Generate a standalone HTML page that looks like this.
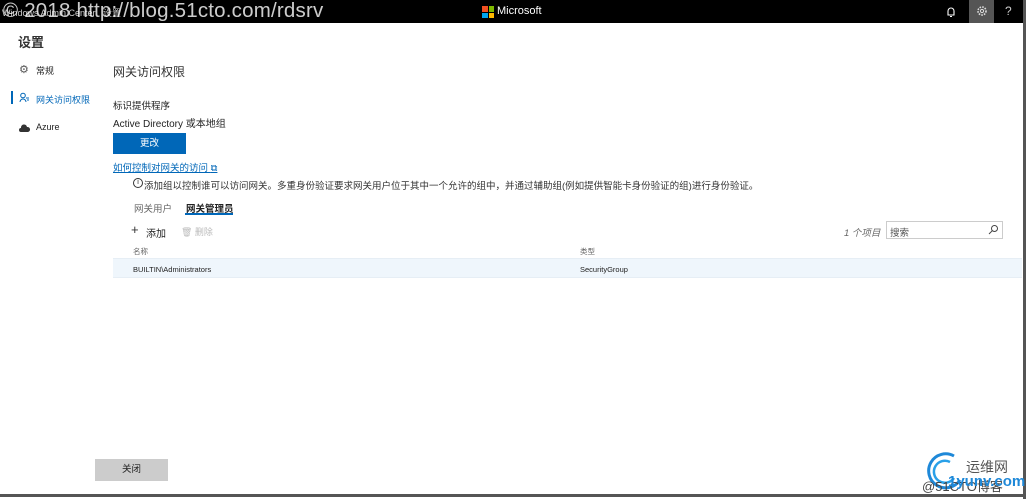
<!DOCTYPE html>
<html><head><meta charset="utf-8">
<style>
*{margin:0;padding:0;box-sizing:border-box}
body{width:1028px;height:499px;overflow:hidden;background:#fff;font-family:"Liberation Sans","Noto Sans CJK SC",sans-serif;color:#222;position:relative;font-size:9px}
.abs{position:absolute;white-space:nowrap}
.top{position:absolute;left:0;top:0;width:1024px;height:23px;background:#000}
</style></head><body>
<div class="top"></div>
<div class="abs" style="left:2px;top:6px;font-size:9px;color:#ccc">Windows Admin Center &nbsp; 设置</div>
<div class="abs" style="left:3px;top:-1px;font-size:20.5px;color:rgba(255,255,255,0.8);letter-spacing:0.2px">© 2018 http://blog.51cto.com/rdsrv</div>
<div class="abs" style="left:482px;top:6px;width:12px;height:12px">
<div style="position:absolute;left:0;top:0;width:5.5px;height:5.5px;background:#f25022"></div>
<div style="position:absolute;left:6.5px;top:0;width:5.5px;height:5.5px;background:#7fba00"></div>
<div style="position:absolute;left:0;top:6.5px;width:5.5px;height:5.5px;background:#00a4ef"></div>
<div style="position:absolute;left:6.5px;top:6.5px;width:5.5px;height:5.5px;background:#ffb900"></div></div>
<div class="abs" style="left:497px;top:5px;font-size:11px;color:#fff">Microsoft</div>
<svg class="abs" style="left:946px;top:6px" width="10" height="12" viewBox="0 0 10 12"><path d="M2 9V5a3 3 0 0 1 6 0v4H2zM4 10.5h2" stroke="#fff" fill="none" stroke-width="1.1"/></svg>
<div class="abs" style="left:969px;top:0;width:25px;height:23px;background:#555"></div>
<svg class="abs" style="left:976px;top:5px" width="12" height="12" viewBox="0 0 12 12"><circle cx="6" cy="6" r="4" stroke="#ddd" fill="none" stroke-width="1.6" stroke-dasharray="1.6 1.1"/><circle cx="6" cy="6" r="1.6" stroke="#ddd" fill="none"/></svg>
<div class="abs" style="left:1005px;top:4px;font-size:12px;color:#ccc">?</div>
<div class="abs" style="left:1023px;top:0;width:3px;height:499px;background:#555"></div>
<div class="abs" style="left:0;top:494px;width:1026px;height:3px;background:#555"></div>

<div class="abs" style="left:18px;top:32px;font-size:13px;font-weight:bold;color:#333">设置</div>
<div class="abs" style="left:19px;top:63px;font-size:11px;color:#555">⚙</div>
<div class="abs" style="left:36px;top:64px;font-size:9px">常规</div>
<div class="abs" style="left:11px;top:91px;width:2px;height:13px;background:#0067b8"></div>
<svg class="abs" style="left:19px;top:92px" width="11" height="11" viewBox="0 0 11 11"><circle cx="4" cy="3.5" r="2.3" stroke="#0067b8" fill="none"/><path d="M1 10a3 3 0 0 1 6 0M7 6h3M8 8h2" stroke="#0067b8" fill="none"/></svg>
<div class="abs" style="left:36px;top:93px;font-size:9px;color:#0067b8">网关访问权限</div>
<svg class="abs" style="left:19px;top:124px" width="11" height="8" viewBox="0 0 11 8"><path d="M2 8a2 2 0 0 1 0-4a3 3 0 0 1 6-1a2.5 2.5 0 0 1 1 5z" fill="#333"/></svg>
<div class="abs" style="left:36px;top:122px;font-size:9px">Azure</div>

<div class="abs" style="left:113px;top:63px;font-size:12px;color:#333">网关访问权限</div>
<div class="abs" style="left:113px;top:98px;font-size:9.5px">标识提供程序</div>
<div class="abs" style="left:113px;top:115px;font-size:10px">Active Directory 或本地组</div>
<div class="abs" style="left:113px;top:133px;width:73px;height:21px;background:#0067b8;color:#fff;font-size:9.5px;text-align:center;line-height:21px">更改</div>
<div class="abs" style="left:113px;top:160px;font-size:9.5px;color:#0067b8;text-decoration:underline">如何控制对网关的访问 <span style="text-decoration:none">⧉</span></div>
<div class="abs" style="left:133px;top:178px;width:10px;height:10px;border:1px solid #333;border-radius:50%;font-size:7px;text-align:center;line-height:8px">i</div>
<div class="abs" style="left:144px;top:178px;font-size:9.5px;color:#333">添加组以控制谁可以访问网关。多重身份验证要求网关用户位于其中一个允许的组中，并通过辅助组(例如提供智能卡身份验证的组)进行身份验证。</div>
<div class="abs" style="left:134px;top:201px;font-size:9.5px;color:#666">网关用户</div>
<div class="abs" style="left:186px;top:201px;font-size:9.5px;font-weight:bold;color:#222">网关管理员</div>
<div class="abs" style="left:185px;top:213px;width:48px;height:2px;background:#0067b8"></div>
<div class="abs" style="left:131px;top:222px;font-size:13px;color:#333">+</div>
<div class="abs" style="left:146px;top:225px;font-size:10px">添加</div>
<div class="abs" style="left:181px;top:225px;font-size:9px;color:#bbb">🗑 删除</div>
<div class="abs" style="left:133px;top:246px;font-size:7.5px;color:#666">名称</div>
<div class="abs" style="left:580px;top:246px;font-size:7.5px;color:#666">类型</div>
<div class="abs" style="left:113px;top:258px;width:909px;height:20px;background:#eff6fc;border-top:1px solid #e6eef5;border-bottom:1px solid #e6eef5"></div>
<div class="abs" style="left:133px;top:265px;font-size:7.5px">BUILTIN\Administrators</div>
<div class="abs" style="left:580px;top:265px;font-size:7.5px">SecurityGroup</div>
<div class="abs" style="left:844px;top:225px;font-size:9.5px;font-style:italic;color:#666">1 个项目</div>
<div class="abs" style="left:886px;top:221px;width:117px;height:18px;border:1px solid #ccc"></div>
<div class="abs" style="left:890px;top:225px;font-size:9.5px;color:#555">搜索</div>
<svg class="abs" style="left:988px;top:224px" width="11" height="11" viewBox="0 0 11 11"><circle cx="6.5" cy="4.5" r="3" stroke="#444" fill="none"/><path d="M4.3 6.7L1 10" stroke="#444"/></svg>

<div class="abs" style="left:95px;top:459px;width:73px;height:22px;background:#ccc;font-size:9.5px;text-align:center;line-height:22px">关闭</div>

<svg class="abs" style="left:924px;top:450px" width="40" height="40" viewBox="0 0 40 40"><path d="M30 6A17 17 0 1 0 36 30" stroke="#1e88d8" stroke-width="3" fill="none"/><path d="M26 12A11 11 0 1 0 30 28" stroke="#29a0e8" stroke-width="2.5" fill="none"/></svg>
<div class="abs" style="left:966px;top:457px;font-size:14px;color:#555">运维网</div>
<div class="abs" style="left:922px;top:476px;font-size:13px;color:#444">@51CTO博客</div>
<div class="abs" style="left:948px;top:473px;font-size:15px;font-weight:bold;color:#1e88d8">1yunv.com</div>
</body></html>
